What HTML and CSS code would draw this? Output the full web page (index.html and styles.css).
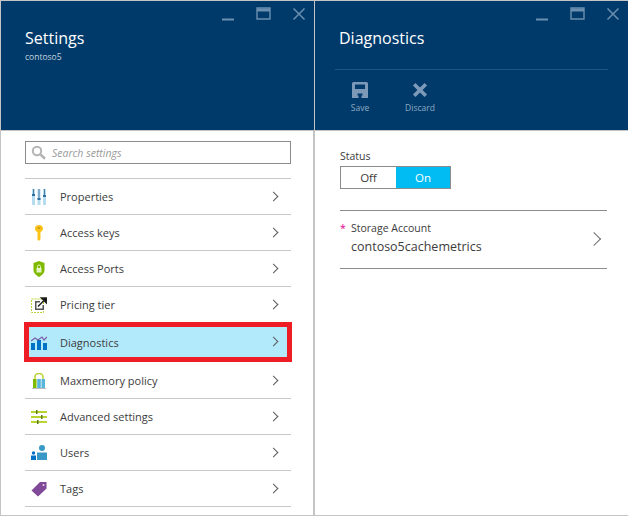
FILE: index.html
```html
<!DOCTYPE html>
<html>
<head>
  <title>Diagnostics</title>
  <link rel="stylesheet" href="styles.css">
</head>
<body>
  <div class="desktop">
    <section class="blade">
      <header class="blade-head">
        <div class="win-btns">
          <svg width="14" height="14" viewBox="0 0 14 14"><path d="M1 12.5h12" stroke="#6b8fb0" stroke-width="2"/></svg>
          <svg width="15" height="14" viewBox="0 0 15 14"><path d="M1 1h13v11H1z" fill="none" stroke="#6b8fb0" stroke-width="1.4"/><path d="M1 3h13" stroke="#6b8fb0" stroke-width="3"/></svg>
          <svg width="14" height="14" viewBox="0 0 14 14"><path d="M1.500 1.500l11 11M12.500 1.500l-11 11" stroke="#6b8fb0" stroke-width="1.500"/></svg>
        </div>
        <h1 class="blade-title">Settings</h1>
        <div class="blade-sub">contoso5</div>
      </header>
      <div class="settings-body">
        <div class="search">
          <svg width="16" height="15" viewBox="0 0 16 15"><circle cx="6" cy="6" r="4.200" fill="none" stroke="#b4b4b4" stroke-width="2"/><path d="M9.500 9.500l4.500 4.300" stroke="#b4b4b4" stroke-width="2.600"/></svg>
          <span>Search settings</span>
        </div>
        <ul class="menu">
          <li class="menu-row">
            <svg class="menu-icon" width="16" height="16" viewBox="0 0 16 16">
              <path d="M1 0h3v16H1zM6.500 0h3v16h-3zM12 0h3v16h-3z" fill="#b5dcef"/>
              <path d="M2 0h1v5H2zM7.500 0h1v9h-1zM13 0h1v6h-1z" fill="#4a7fa8"/>
              <path d="M1 5h3v2H1zM6.500 9h3v2h-3zM12 6h3v2h-3z" fill="#2f6f9f"/>
            </svg>
            <span>Properties</span><i class="chev"></i>
          </li>
          <li class="menu-row">
            <svg class="menu-icon" width="16" height="16" viewBox="0 0 16 16">
              <path d="M8 0c2.600 0 4 1.500 4 3.500 0 1.800-1.100 3-2.500 3.400V14l-1.500 2-1.500-1.500V7C5 6.500 4 5.300 4 3.500 4 1.500 5.400 0 8 0z" fill="#fcc419"/>
              <path d="M6.500 3h3" stroke="#a97f10" stroke-width="1"/>
            </svg>
            <span>Access keys</span><i class="chev"></i>
          </li>
          <li class="menu-row">
            <svg class="menu-icon" width="16" height="16" viewBox="0 0 16 16">
              <path d="M8 0l5.500 2v7c0 3.500-3 5.500-5.500 7-2.500-1.500-5.500-3.500-5.500-7V2z" fill="#7fba00"/>
              <path d="M5.500 7h5v4.500h-5z" fill="#e6f3c4"/>
              <path d="M6.500 7V5.500a1.500 1.500 0 013 0V7" fill="none" stroke="#e6f3c4"/>
            </svg>
            <span>Access Ports</span><i class="chev"></i>
          </li>
          <li class="menu-row">
            <svg class="menu-icon" width="16" height="16" viewBox="0 0 16 16">
              <path d="M.500 2h12v13.500H.500z" fill="none" stroke="#b8d432" stroke-dasharray="2 1"/>
              <path d="M4 4h5v1.500H5.500v6h6V8H13v5H4z" fill="#555"/>
              <path d="M7 9.500L14 2.500M10.500 1h5v5z" stroke="#222" stroke-width="1.500"/>
            </svg>
            <span>Pricing tier</span><i class="chev"></i>
          </li>
          <li class="menu-row is-selected">
            <svg class="menu-icon" width="16" height="16" viewBox="0 0 16 16">
              <path d="M0 9h4v7H0zM6 6h4v10H6zM12 9h4v7h-4z" fill="#0072c6"/>
              <path d="M0 7l4-3 3 2 4-3 2 3 3-3" fill="none" stroke="#7a5fa8" stroke-width="1.200"/>
            </svg>
            <span>Diagnostics</span><i class="chev"></i>
          </li>
          <li class="menu-row">
            <svg class="menu-icon" width="16" height="16" viewBox="0 0 16 16">
              <path d="M4 7V3.500a4 3 0 018 0V7" fill="none" stroke="#b8d432" stroke-width="1.500"/>
              <path d="M2 6h3.500v9H2z" fill="#7fba00"/><path d="M6.200 6h3.600v9H6.200z" fill="#59b4d9"/><path d="M10.500 6H14v9h-3.500z" fill="#59b4d9"/>
              <path d="M1 15h14v1H1z" fill="#bbb"/>
            </svg>
            <span>Maxmemory policy</span><i class="chev"></i>
          </li>
          <li class="menu-row">
            <svg class="menu-icon" width="16" height="14" viewBox="0 0 16 14">
              <path d="M0 1h16v2H0zM0 6h16v2H0zM0 11h16v2H0z" fill="#b8d432"/>
              <path d="M5 0h1.500v4H5zM10 5h1.500v4H10zM6 10h1.500v4H6z" fill="#5c7a1f"/>
            </svg>
            <span>Advanced settings</span><i class="chev"></i>
          </li>
          <li class="menu-row">
            <svg class="menu-icon" width="16" height="16" viewBox="0 0 16 16">
              <circle cx="11" cy="3" r="3" fill="#3999c6"/>
              <path d="M6 7.500h10V15H6z" fill="#3999c6"/>
              <circle cx="2.500" cy="8" r="1.700" fill="#0072c6"/>
              <path d="M0 10.500h5V15H0z" fill="#0072c6"/>
            </svg>
            <span>Users</span><i class="chev"></i>
          </li>
          <li class="menu-row">
            <svg class="menu-icon" width="16" height="16" viewBox="0 0 16 16">
              <path d="M9 1h6.500v6.500L7 15.500 .500 9.500z" fill="#804998"/>
              <circle cx="12.500" cy="4" r="1" fill="#e8d8f0"/>
            </svg>
            <span>Tags</span><i class="chev"></i>
          </li>
        </ul>
      </div>
    </section>

    <section class="blade">
      <header class="blade-head">
        <div class="win-btns">
          <svg width="14" height="14" viewBox="0 0 14 14"><path d="M1 12.500h12" stroke="#6b8fb0" stroke-width="2"/></svg>
          <svg width="15" height="14" viewBox="0 0 15 14"><path d="M1 1h13v11H1z" fill="none" stroke="#6b8fb0" stroke-width="1.400"/><path d="M1 3h13" stroke="#6b8fb0" stroke-width="3"/></svg>
          <svg width="14" height="14" viewBox="0 0 14 14"><path d="M1.500 1.500l11 11M12.500 1.500l-11 11" stroke="#6b8fb0" stroke-width="1.500"/></svg>
        </div>
        <h1 class="blade-title">Diagnostics</h1>
        <div class="command-bar">
          <div class="command">
            <svg width="16" height="16" viewBox="0 0 16 16"><path d="M1.500 0h13A1.500 1.500 0 0116 1.500V16H0V1.500A1.500 1.500 0 011.500 0zM3 2.500V7h10V2.500zM3 10v3.500h3.500V16h3v-2.500H13V10z" fill="#7c9ab8" fill-rule="evenodd"/><path d="M3 9.500h10V16h-2.500v-4.500h-5V16H3z" fill="#7c9ab8"/></svg>
            <span>Save</span>
          </div>
          <div class="command">
            <svg width="16" height="16" viewBox="0 0 16 16"><path d="M2.200 2.200l11.600 11.600M13.800 2.200L2.200 13.800" stroke="#7c9ab8" stroke-width="3.600"/></svg>
            <span>Discard</span>
          </div>
        </div>
      </header>
      <div class="diag-body">
        <div class="field-label">Status</div>
        <div class="toggle">
          <div class="toggle-off">Off</div>
          <div class="toggle-on">On</div>
        </div>
        <div class="storage">
          <div>
            <div class="storage-label"><em>*</em>Storage Account</div>
            <div class="storage-value">contoso5cachemetrics</div>
          </div>
          <i class="chev chev-big"></i>
        </div>
      </div>
    </section>
  </div>
</body>
</html>
```

FILE: styles.css
```css
html, body {
  margin: 0;
  padding: 0;
}

body {
  width: 628px;
  height: 516px;
  overflow: hidden;
  font-family: "Open Sans", "Noto Sans", sans-serif;
  background-color: #ffffff;
  color: #3c3c3c;
}

.desktop {
  display: flex;
  height: 515px;
  border-top: 1px solid #c4c4c4;
  border-bottom: 1px solid #c4c4c4;
  box-sizing: border-box;
  height: 516px;
}

.blade {
  width: 314px;
  flex: none;
  box-sizing: border-box;
  border-left: 1px solid #c4c4c4;
}

.blade + .blade {
  border-left: 2px solid #c4c4c4;
  margin-left: -1px;
  width: 315px;
}

.blade-head {
  position: relative;
  height: 129px;
  box-sizing: border-box;
  padding: 25px 0 0 24px;
  background-color: #003a6a;
  color: #ffffff;
  border-bottom: 0;
}

.win-btns {
  position: absolute;
  top: 6px;
  right: 8px;
  display: flex;
  gap: 21px;
}

.blade-title {
  margin: 0;
  font-size: 16px;
  line-height: 24px;
  font-weight: 400;
}

.blade-sub {
  margin-top: 1px;
  font-size: 8.500px;
  line-height: 12px;
  color: #c6d3df;
}

.command-bar {
  display: flex;
  gap: 30px;
  margin: 19px 20px 0 -4px;
  padding: 12px 0 0 10px;
  border-top: 1px solid #1c5482;
}

.command {
  display: flex;
  flex-direction: column;
  align-items: center;
  width: 30px;
  font-size: 8.500px;
  line-height: 12px;
  color: #8fa9c2;
}

.command svg {
  margin-bottom: 4px;
}

.settings-body {
  padding: 10px 23px 0 24px;
  border-top: 1px solid #c4c4c4;
}

.search {
  display: flex;
  align-items: center;
  gap: 5px;
  height: 23px;
  box-sizing: border-box;
  padding-left: 5px;
  border: 1px solid #8c8c8c;
  font-size: 10.500px;
  font-style: italic;
  color: #9a9a9a;
}

.menu {
  list-style: none;
  margin: 14px 0 0 0;
  padding: 0;
  border-top: 1px solid #c8c8c8;
}

.menu-row {
  position: relative;
  display: flex;
  align-items: center;
  height: 35px;
  padding-left: 6px;
  border-bottom: 1px solid #c8c8c8;
  font-size: 11px;
}

.menu-icon {
  flex: none;
  width: 16px;
  margin-right: 13px;
}

.is-selected {
  background-color: #b3eafb;
  margin-top: -1px;
  border-bottom: 0;
  height: 30px;
  margin-bottom: 6px;
  margin-top: 4px;
  outline: 5px solid #ee1c25;
  margin-left: 4px;
  margin-right: 4px;
  padding-left: 2px;
}

.chev {
  position: absolute;
  right: 14px;
  top: 50%;
  width: 6px;
  height: 6px;
  margin-top: -4px;
  border-top: 1px solid #5a5a5a;
  border-right: 1px solid #5a5a5a;
  transform: rotate(45deg);
}

.is-selected .chev {
  right: 10px;
}

.chev-big {
  right: 8px;
  width: 9px;
  height: 9px;
  margin-top: -6px;
  border-color: #6e6e6e;
}

.diag-body {
  padding: 18px 21px 0 25px;
  border-top: 1px solid #c4c4c4;
}

.field-label {
  font-size: 10.500px;
  line-height: 14px;
}

.toggle {
  display: flex;
  width: 111px;
  height: 23px;
  margin-top: 3px;
  box-sizing: border-box;
  border: 1px solid #8c8c8c;
  font-size: 11.500px;
  line-height: 21px;
  text-align: center;
}

.toggle-off {
  width: 55px;
}

.toggle-on {
  flex: 1;
  background-color: #00bcf2;
  color: #ffffff;
}

.storage {
  position: relative;
  height: 59px;
  margin-top: 21px;
  padding-top: 10px;
  box-sizing: border-box;
  border-top: 1px solid #8c8c8c;
  border-bottom: 1px solid #8c8c8c;
}

.storage-label {
  font-size: 10.500px;
  line-height: 15px;
}

.storage-label em {
  display: inline-block;
  width: 11px;
  font-style: normal;
  color: #e3008c;
}

.storage-value {
  margin: 2px 0 0 11px;
  font-size: 12.500px;
  line-height: 18px;
}
```
